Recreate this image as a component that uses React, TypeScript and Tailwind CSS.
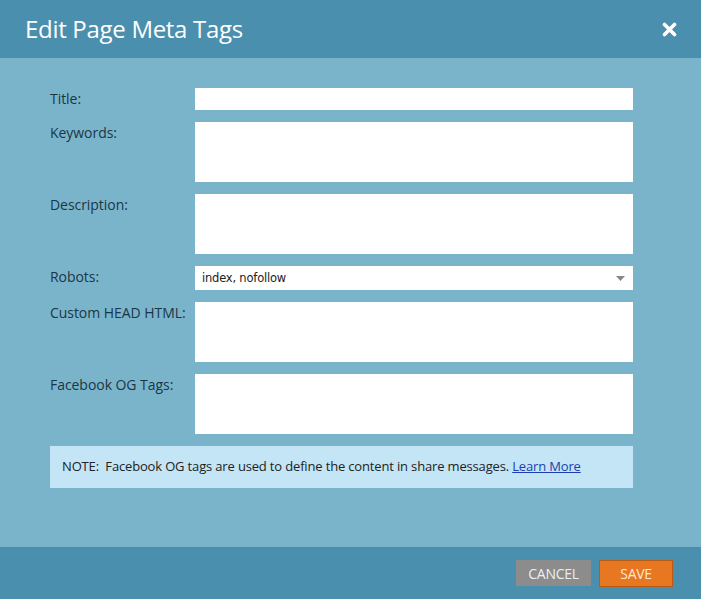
import React from "react";

const font = { fontFamily: "'Open Sans', 'Noto Sans', sans-serif" };

function Row({ label, tall, children }: { label: string; tall?: boolean; children?: React.ReactNode }) {
  return (
    <div className="flex">
      <div className="w-[145px] shrink-0 text-[14px] leading-[20px] text-[#1b3645] pt-[1px] tracking-[-0.05px]">{label}</div>
      {children ?? <div className={`w-[438px] bg-white ${tall ? "h-[60px]" : "h-[22px]"}`} />}
    </div>
  );
}

export default function App() {
  return (
    <div className="w-[701px] h-[599px] flex flex-col bg-[#7ab4cb] overflow-hidden" style={font}>
      <div className="h-[58px] shrink-0 bg-[#4a8fad] flex items-center justify-between pl-[25px] pr-[24px]">
        <div className="text-white text-[24px] tracking-[-0.3px] pb-[1px]">Edit Page Meta Tags</div>
        <svg width="15" height="15" viewBox="0 0 15 15">
          <path d="M2.5 2.5 L12.5 12.5 M12.5 2.5 L2.5 12.5" stroke="white" strokeWidth="3.6" strokeLinecap="round" />
        </svg>
      </div>
      <div className="flex-1 flex flex-col gap-[12px] pt-[30px] pl-[50px]">
        <Row label="Title:" />
        <Row label="Keywords:" tall />
        <Row label="Description:" tall />
        <Row label="Robots:">
          <div className="w-[438px] h-[24px] bg-white flex items-center justify-between pl-[7px] pr-[8px] text-[#222]" style={{ fontFamily: "'DejaVu Sans', sans-serif", fontSize: "11.5px" }}>
            <span className="tracking-[-0.2px] pt-[1px]">index, nofollow</span>
            <svg width="9" height="5" viewBox="0 0 9 5"><path d="M0 0 L9 0 L4.5 5 Z" fill="#888" /></svg>
          </div>
        </Row>
        <Row label="Custom HEAD HTML:" tall />
        <Row label="Facebook OG Tags:" tall />
        <div className="w-[583px] h-[42px] bg-[#c3e5f6] flex items-center pl-[12px] text-[13px] text-[#222] tracking-[-0.16px]">
          <span>NOTE:&nbsp; Facebook OG tags are used to define the content in share messages.&nbsp;</span>
          <a className="text-[#1b3fb0] underline" href="#">Learn More</a>
        </div>
      </div>
      <div className="h-[52px] shrink-0 bg-[#4a8fad] flex items-start justify-end gap-[8px] pt-[13px] pr-[28px]">
        <button className="w-[75px] h-[26px] bg-[#8c8c8c] text-[#eee] text-[14px] tracking-[-0.3px]">CANCEL</button>
        <button className="w-[74px] h-[27px] bg-[#e87722] border border-[#b85a14] text-[#fde7d3] text-[14px] tracking-[-0.3px]">SAVE</button>
      </div>
    </div>
  );
}
